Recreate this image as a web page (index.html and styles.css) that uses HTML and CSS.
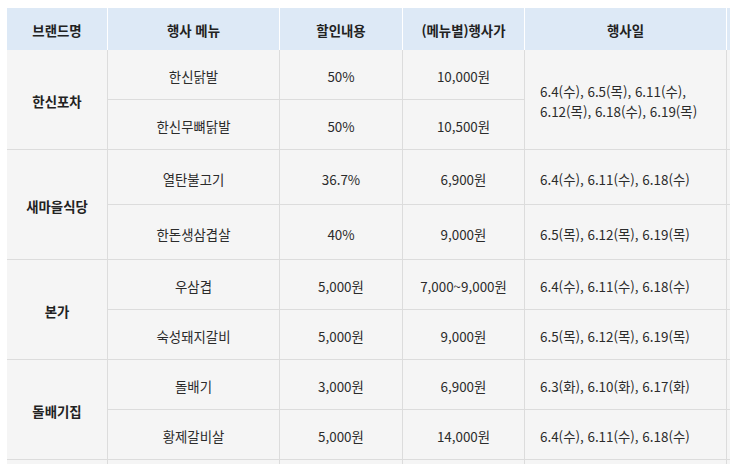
FILE: index.html
```html
<!DOCTYPE html>
<html lang="ko">
<head>
<meta charset="utf-8">
<title>행사 안내</title>
<link rel="stylesheet" href="styles.css">
</head>
<body>
<div class="wrap">
<table class="event">
  <thead>
    <tr class="head">
      <th class="c1">브랜드명</th>
      <th class="c2">행사 메뉴</th>
      <th class="c3">할인내용</th>
      <th class="c4">(메뉴별)행사가</th>
      <th class="c5">행사일</th>
      <th class="c6"></th>
    </tr>
  </thead>
  <tbody>
    <tr class="r50">
      <td class="brand" rowspan="2">한신포차</td>
      <td>한신닭발</td>
      <td>50%</td>
      <td>10,000원</td>
      <td class="date" rowspan="2">6.4(수), 6.5(목), 6.11(수),<br>6.12(목), 6.18(수), 6.19(목)</td>
      <td class="extra" rowspan="2"></td>
    </tr>
    <tr class="r50">
      <td>한신무뼈닭발</td>
      <td>50%</td>
      <td>10,500원</td>
    </tr>
    <tr class="r55">
      <td class="brand" rowspan="2">새마을식당</td>
      <td>열탄불고기</td>
      <td>36.7%</td>
      <td>6,900원</td>
      <td class="date">6.4(수), 6.11(수), 6.18(수)</td>
      <td class="extra"></td>
    </tr>
    <tr class="r55">
      <td>한돈생삼겹살</td>
      <td>40%</td>
      <td>9,000원</td>
      <td class="date">6.5(목), 6.12(목), 6.19(목)</td>
      <td class="extra"></td>
    </tr>
    <tr class="r50">
      <td class="brand" rowspan="2">본가</td>
      <td>우삼겹</td>
      <td>5,000원</td>
      <td>7,000~9,000원</td>
      <td class="date">6.4(수), 6.11(수), 6.18(수)</td>
      <td class="extra"></td>
    </tr>
    <tr class="r50">
      <td>숙성돼지갈비</td>
      <td>5,000원</td>
      <td>9,000원</td>
      <td class="date">6.5(목), 6.12(목), 6.19(목)</td>
      <td class="extra"></td>
    </tr>
    <tr class="r50">
      <td class="brand" rowspan="2">돌배기집</td>
      <td>돌배기</td>
      <td>3,000원</td>
      <td>6,900원</td>
      <td class="date">6.3(화), 6.10(화), 6.17(화)</td>
      <td class="extra"></td>
    </tr>
    <tr class="r50">
      <td>황제갈비살</td>
      <td>5,000원</td>
      <td>14,000원</td>
      <td class="date">6.4(수), 6.11(수), 6.18(수)</td>
      <td class="extra"></td>
    </tr>
    <tr class="r50">
      <td class="brand"></td>
      <td></td>
      <td></td>
      <td></td>
      <td class="date"></td>
      <td class="extra"></td>
    </tr>
  </tbody>
</table>
</div>
</body>
</html>
```

FILE: styles.css
```css
html, body {
  margin: 0;
  padding: 0;
  background: #ffffff;
}

body {
  font-family: "Noto Sans CJK KR", "Noto Sans", sans-serif;
  font-size: 13.4px;
  color: #2b2b2b;
  width: 730px;
  height: 464px;
  overflow: hidden;
}

.wrap {
  padding: 8px 0 0 7px;
  width: 723px;
  height: 456px;
  overflow: hidden;
}

.event {
  border-collapse: separate;
  border-spacing: 0;
  table-layout: fixed;
  width: 820px;
}

.event th,
.event td {
  box-sizing: border-box;
  padding: 3px 0 0 0;
  line-height: 20px;
  text-align: center;
  vertical-align: middle;
}

.event th {
  background: #dde9f6;
  color: #222222;
  font-weight: 700;
  border-right: 1px solid #ffffff;
  padding-top: 1px;
}

.head {
  height: 42px;
}

.c1 { width: 101px; }
.c2 { width: 172px; }
.c3 { width: 123px; }
.c4 { width: 122px; }
.c5 { width: 202px; }
.c6 { width: 100px; }

.event td {
  background: #f5f5f5;
  border-right: 1px solid #dcdcdc;
  border-bottom: 1px solid #dcdcdc;
}

.r50 { height: 50px; }
.r55 { height: 55px; }

.event td.brand {
  font-weight: 700;
  color: #222222;
}

.event td.date {
  text-align: left;
  padding-left: 15px;
}
```
